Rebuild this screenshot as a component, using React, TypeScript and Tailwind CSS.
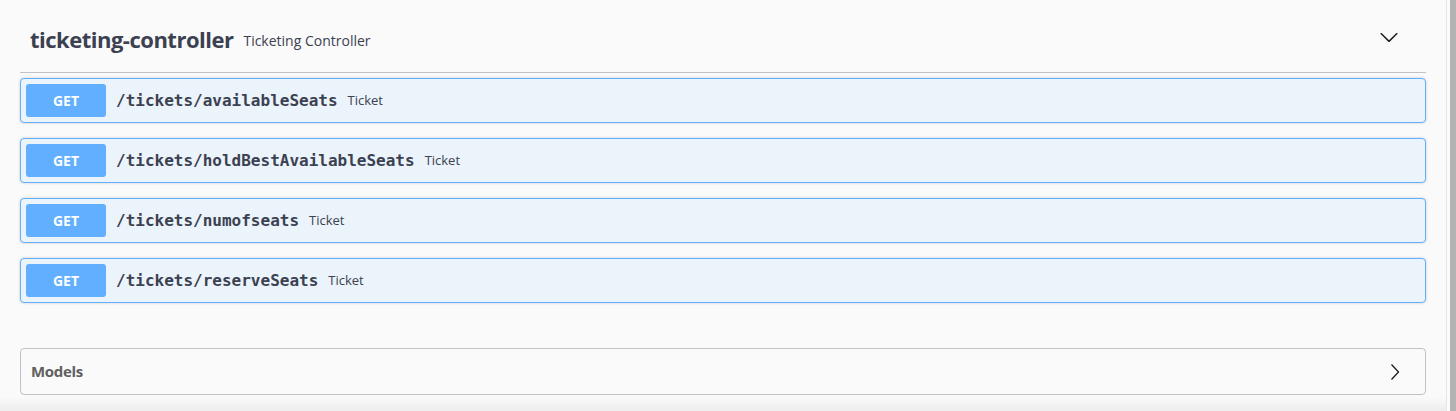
const endpoints = [
  { method: 'GET', path: '/tickets/availableSeats', tag: 'Ticket' },
  { method: 'GET', path: '/tickets/holdBestAvailableSeats', tag: 'Ticket' },
  { method: 'GET', path: '/tickets/numofseats', tag: 'Ticket' },
  { method: 'GET', path: '/tickets/reserveSeats', tag: 'Ticket' },
]

function ChevronDown() {
  return (
    <svg width="20" height="20" viewBox="0 0 20 20" className="fill-[#1a1a1a]">
      <path d="M17.418 6.109c.272-.268.709-.268.979 0s.271.701 0 .969l-7.908 7.83c-.27.268-.707.268-.979 0l-7.908-7.83c-.27-.268-.27-.701 0-.969.271-.268.709-.268.979 0L10 13.25l7.418-7.141z" />
    </svg>
  )
}

function ChevronRight() {
  return (
    <svg width="20" height="20" viewBox="0 0 20 20" fill="none">
      <path d="M6.5 2.5 L13.5 10 L6.5 17.5" stroke="#1a1a1a" strokeWidth="1.3" />
    </svg>
  )
}

function OpBlock({ method, path, tag }: { method: string; path: string; tag: string }) {
  return (
    <div className="mb-[15px] rounded-[4px] border border-[#61affe] bg-[#ebf3fb] shadow-[0_0_3px_rgba(0,0,0,0.19)]">
      <div className="flex items-center p-[5px]">
        <span className="flex h-[33px] min-w-[80px] items-center justify-center rounded-[3px] bg-[#61affe] px-[15px] font-['Open_Sans',sans-serif] text-[14px] font-bold text-white">
          {method}
        </span>
        <span className="pl-[10px] pr-[10px] font-['DejaVu_Sans_Mono',monospace] text-[16px] font-bold text-[#3b4151]">
          {path}
        </span>
        <span className="font-['Open_Sans',sans-serif] text-[13px] text-[#3b4151]">{tag}</span>
      </div>
    </div>
  )
}

export default function App() {
  return (
    <div className="flex h-[411px] w-full overflow-hidden bg-[#fafafa]">
      <div className="flex flex-1 flex-col px-[20px]">
        <div className="mt-[11px] mb-[5px] flex h-[62px] items-center border-b border-[rgba(59,65,81,0.3)] pb-[5px] pl-[10px] pr-[27px]">
          <div className="flex items-baseline">
            <span className="font-['Open_Sans',sans-serif] text-[22px] font-bold tracking-[-0.5px] text-[#3b4151]">
              ticketing-controller
            </span>
            <span className="ml-[10px] -translate-y-[2px] font-['Open_Sans',sans-serif] text-[14px] text-[#3b4151]">
              Ticketing Controller
            </span>
          </div>
          <span className="mb-[4px] ml-auto flex">
            <ChevronDown />
          </span>
        </div>

        {endpoints.map((e) => (
          <OpBlock key={e.path} {...e} />
        ))}

        <div className="mt-[30px] flex h-[47px] items-center rounded-[4px] border border-[rgba(59,65,81,0.3)] pl-[10px] pr-[20px]">
          <span className="font-['Open_Sans',sans-serif] text-[15px] font-bold tracking-[-0.3px] text-[#606060]">
            Models
          </span>
          <span className="ml-auto flex">
            <ChevronRight />
          </span>
        </div>
        <div className="-mx-[20px] mt-[2px] flex-1 bg-gradient-to-b from-[#fafafa] to-[#ededed]" />
      </div>
      <div className="flex w-[10px] shrink-0">
        <div className="w-px bg-[#e6e6e6]" />
        <div className="w-[3px] bg-[#fbfbfb]" />
        <div className="flex-1 bg-[#b3b3b3]" />
      </div>
    </div>
  )
}
